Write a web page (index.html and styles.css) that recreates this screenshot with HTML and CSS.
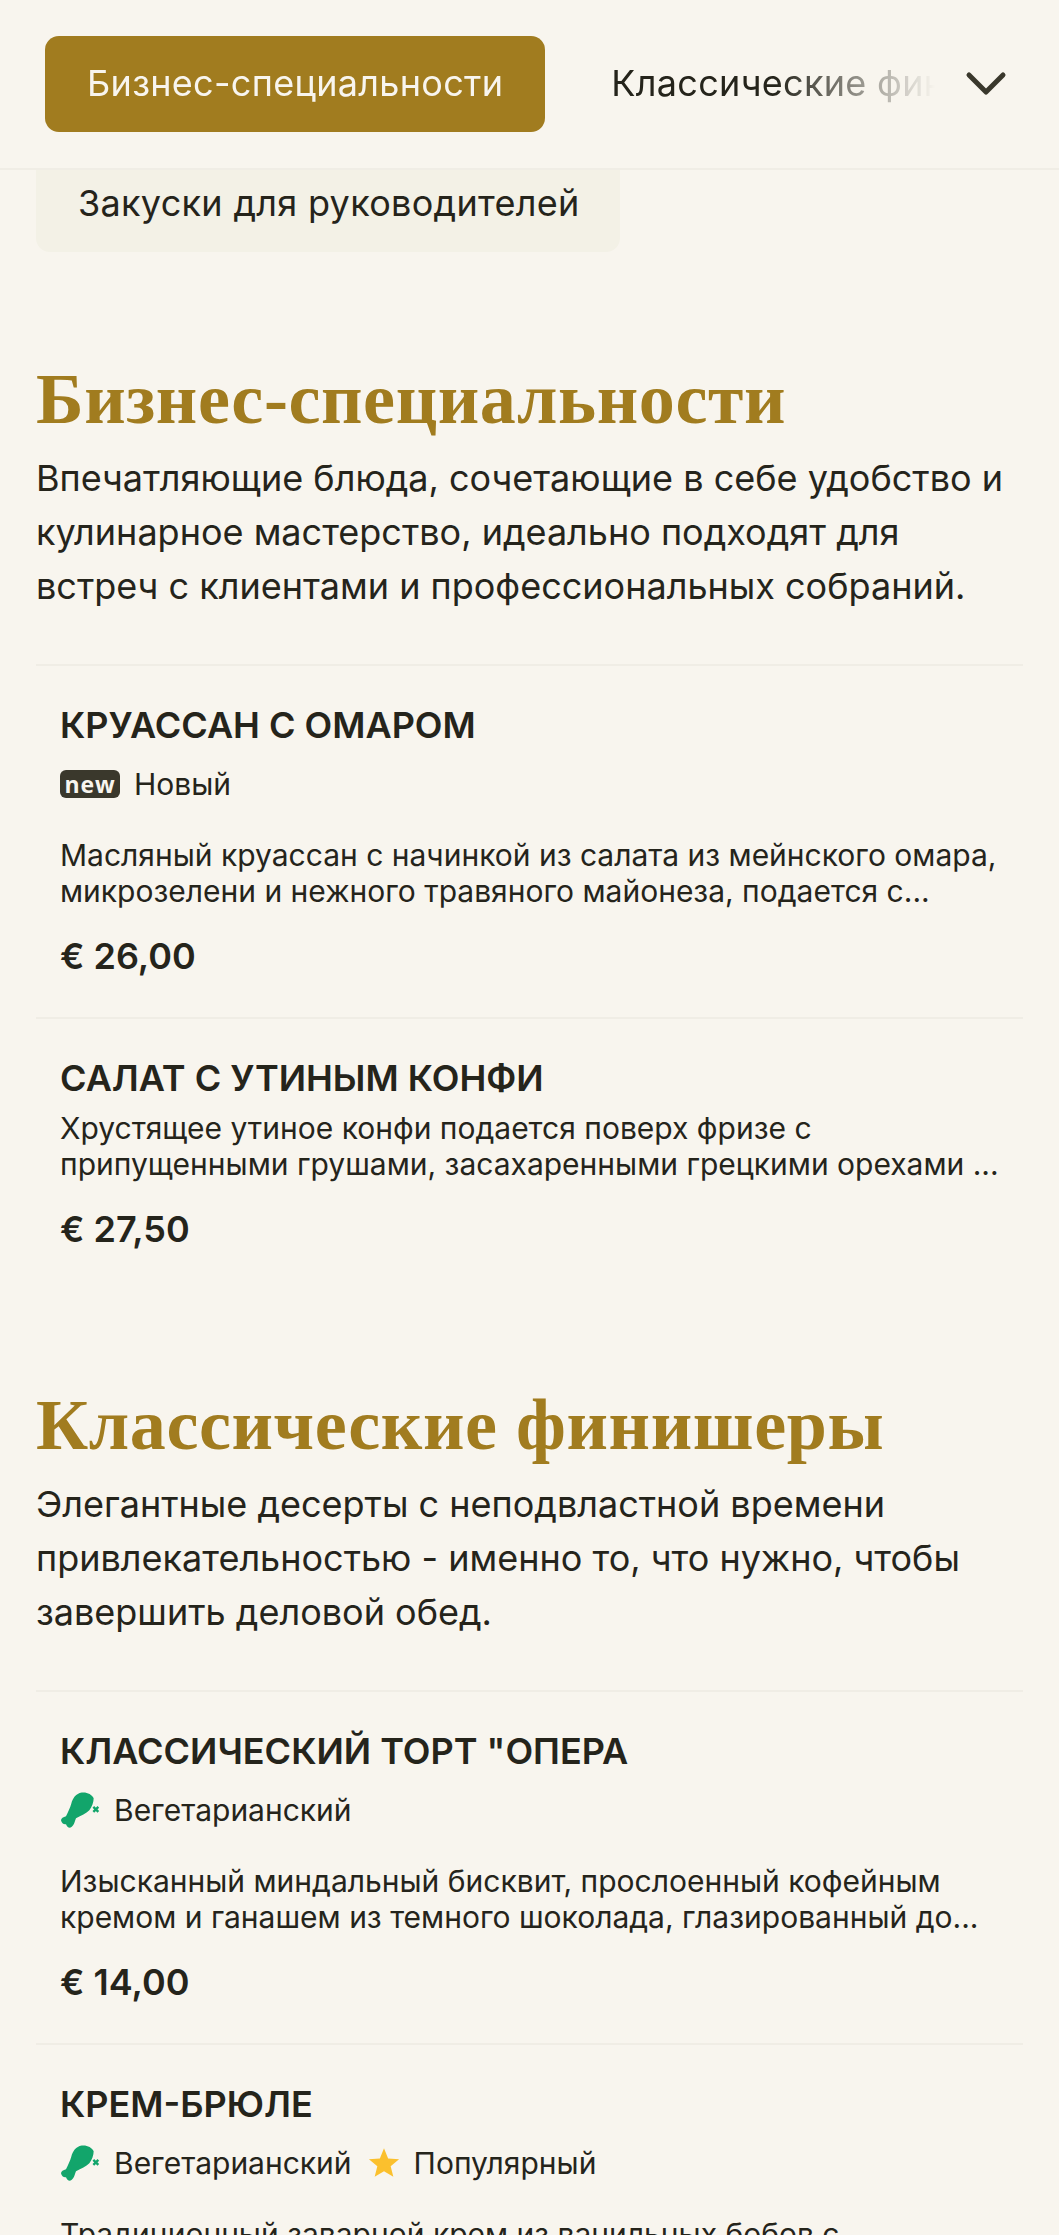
FILE: index.html
```html
<!DOCTYPE html>
<html lang="ru">
<head>
  <meta charset="UTF-8" />
  <meta name="viewport" content="width=device-width, initial-scale=1.0" />
  <title>Меню</title>
  <link rel="stylesheet" href="styles.css">
</head>
<body>
  <div class="page">
    <div class="topbar">
      <div class="cat-scroll">
        <div class="cat active">Бизнес-специальности</div>
        <div class="cat">Классические финишеры</div>
      </div>
      <div class="chevron">
        <svg width="44" height="28" viewBox="0 0 44 28" fill="none"><path d="M5 5 L22 22 L39 5" stroke="#3a382c" stroke-width="5" stroke-linecap="round" stroke-linejoin="round"/></svg>
      </div>
    </div>

    <div class="prev-tab">Закуски для руководителей</div>

    <section class="section first">
      <h2>Бизнес-специальности</h2>
      <p class="intro">Впечатляющие блюда, сочетающие в себе удобство и кулинарное мастерство, идеально подходят для встреч с клиентами и профессиональных собраний.</p>

      <div class="item">
        <h3>КРУАССАН С ОМАРОМ</h3>
        <div class="tags">
          <span class="tag"><span class="new-badge">new</span>Новый</span>
        </div>
        <p class="desc">Масляный круассан с начинкой из салата из мейнского омара, микрозелени и нежного травяного майонеза, подается с...</p>
        <div class="price">€ 26,00</div>
      </div>

      <div class="item no-tags">
        <h3>САЛАТ С УТИНЫМ КОНФИ</h3>
        <p class="desc">Хрустящее утиное конфи подается поверх фризе с припущенными грушами, засахаренными грецкими орехами ...</p>
        <div class="price">€ 27,50</div>
      </div>
    </section>

    <section class="section">
      <h2>Классические финишеры</h2>
      <p class="intro">Элегантные десерты с неподвластной времени привлекательностью - именно то, что нужно, чтобы завершить деловой обед.</p>

      <div class="item">
        <h3>КЛАССИЧЕСКИЙ ТОРТ "ОПЕРА</h3>
        <div class="tags">
          <span class="tag">
            <svg class="veg" viewBox="0 0 120 107"><path d="M65 1C80-1 96 6 101 18 101 30 96 44 88 54 78 64 64 70 48 78 44 88 42 100 32 106 26 108 20 102 18 96 12 98 4 92 3 84 3 78 10 74 18 72 24 60 30 48 34 34 38 18 48 4 65 1Z" fill="#12a56b"/><path d="M100 44l15 15M115 44l-15 15" stroke="#12a56b" stroke-width="7"/></svg>
            Вегетарианский
          </span>
        </div>
        <p class="desc">Изысканный миндальный бисквит, прослоенный кофейным кремом и ганашем из темного шоколада, глазированный до...</p>
        <div class="price">€ 14,00</div>
      </div>

      <div class="item">
        <h3>КРЕМ-БРЮЛЕ</h3>
        <div class="tags">
          <span class="tag">
            <svg class="veg" viewBox="0 0 120 107"><path d="M65 1C80-1 96 6 101 18 101 30 96 44 88 54 78 64 64 70 48 78 44 88 42 100 32 106 26 108 20 102 18 96 12 98 4 92 3 84 3 78 10 74 18 72 24 60 30 48 34 34 38 18 48 4 65 1Z" fill="#12a56b"/><path d="M100 44l15 15M115 44l-15 15" stroke="#12a56b" stroke-width="7"/></svg>
            Вегетарианский
          </span>
          <span class="tag">
            <svg class="star" viewBox="0 0 24 24"><path d="M12 1l3.1 7.6 8.2.6-6.3 5.2 2 8L12 18.1l-7 4.3 2-8L.7 9.2l8.2-.6z" fill="#fbc02d"/></svg>
            Популярный
          </span>
        </div>
        <p class="desc">Традиционный заварной крем из ванильных бобов с</p>
      </div>
    </section>
  </div>
</body>
</html>
```

FILE: styles.css
```css
* { box-sizing: border-box; }
html, body {
  margin: 0;
  height: 100%;
}
body {
  font-family: "Inter", "Noto Sans", sans-serif;
  background: #f8f5ee;
  color: #25241b;
  overflow: hidden;
}
.page {
  height: 2235px;
  overflow: hidden;
}
.topbar {
  display: flex;
  align-items: center;
  height: 170px;
  padding-left: 45px;
  border-bottom: 2px solid #f0ede5;
}
.cat-scroll {
  display: flex;
  align-items: center;
  gap: 66px;
  width: 890px;
  overflow: hidden;
  flex-shrink: 0;
  -webkit-mask-image: linear-gradient(to right, #000 82%, transparent 100%);
  mask-image: linear-gradient(to right, #000 82%, transparent 100%);
}
.cat {
  flex-shrink: 0;
  white-space: nowrap;
  font-size: 36px;
  letter-spacing: 0.3px;
  line-height: 94px;
  padding: 0 42px 2px;
  border-radius: 14px;
}
.cat:not(.active) { padding: 0 0 2px; }
.cat.active {
  background: #a17c1f;
  color: #f8f5ee;
}
.chevron {
  margin-left: 29px;
  display: flex;
}
.prev-tab {
  width: 584px;
  height: 82px;
  margin-left: 36px;
  padding-left: 42px;
  font-size: 36px;
  letter-spacing: 0.3px;
  line-height: 66px;
  background: #f3f1e6;
  border-radius: 0 0 14px 14px;
}
.section { margin: 0 36px; padding-top: 93px; }
.section.first { padding-top: 105px; }
h2 {
  margin: 0;
  font-family: "Liberation Serif", serif;
  font-weight: 700;
  font-size: 72px;
  letter-spacing: 0.6px;
  line-height: 84px;
  color: #a17c1f;
}
.intro {
  margin: 10px 0 51px;
  font-size: 36px;
  line-height: 54px;
}
.item {
  border-top: 2px solid #f0ede5;
  padding: 36px 24px 38px;
}
h3 {
  margin: 0;
  font-size: 36px;
  line-height: 46px;
  font-weight: 600;
}
.tags {
  display: flex;
  gap: 16px;
  margin-top: 16px;
}
.tag {
  display: flex;
  align-items: center;
  gap: 14px;
  font-size: 30px;
  line-height: 40px;
}
.new-badge {
  background: #3a382c;
  color: #f8f5ee;
  font-family: "Open Sans", sans-serif;
  font-size: 23px;
  font-weight: 700;
  letter-spacing: 0.8px;
  line-height: 28px;
  width: 60px;
  text-align: center;
  border-radius: 6px;
}
.veg { width: 40px; height: 36px; }
.star { width: 32px; height: 32px; }
.desc {
  margin: 33px 0 0;
  font-size: 30px;
  line-height: 36px;
}
.no-tags .desc { margin-top: 9px; }
.price {
  margin-top: 24px;
  font-size: 36px;
  line-height: 46px;
  font-weight: 600;
}
```
